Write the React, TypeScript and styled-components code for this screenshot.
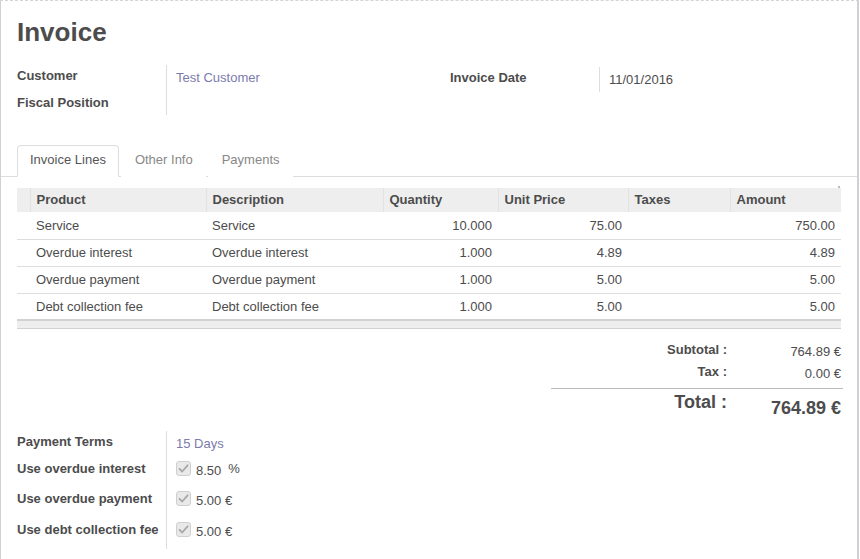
import React from "react";
import styled, { createGlobalStyle } from "styled-components";

const Global = createGlobalStyle`
  html, body { margin: 0; padding: 0; background: #fff; }
  body { font-family: "Liberation Sans", Arial, Helvetica, sans-serif; font-size: 13px; color: #4c4c4c; }
  * { box-sizing: border-box; }
`;

const Sheet = styled.div`
  width: 859px;
  height: 559px;
  border-top: 1px dashed #d4d4d4;
  border-left: 1px solid #cfcfd6;
  border-right: 2px solid #cfcfd6;
  background: #fff;
  padding-top: 16px;
  overflow: hidden;
`;

const Title = styled.h1`
  margin: 0 0 0 16px;
  font-size: 26px;
  line-height: 30px;
  font-weight: bold;
  color: #4c4c4c;
`;

const HeaderGrid = styled.div`
  display: grid;
  grid-template-columns: 433px 391px;
  margin: 18px 0 0 16px;
`;

const Group = styled.div<{ $top?: number }>`
  display: grid;
  grid-template-columns: 150px 1fr;
  align-content: start;
  padding-top: ${(p) => p.$top ?? 0}px;
`;

const Label = styled.div<{ $h?: number }>`
  font-weight: bold;
  color: #4c4c4c;
  height: ${(p) => p.$h ?? 27}px;
  padding-top: 3px;
  border-right: 1px solid #ddd;
  line-height: 15px;
`;

const Value = styled.div<{ $h?: number; $link?: boolean }>`
  height: ${(p) => p.$h ?? 27}px;
  padding: 5px 0 0 9px;
  line-height: 15px;
  color: ${(p) => (p.$link ? "#7c7bad" : "#4c4c4c")};
  display: flex;
  align-items: flex-start;
`;

const TabBar = styled.div`
  display: flex;
  margin-top: 30px;
  padding-left: 16px;
  border-bottom: 1px solid #ddd;
  height: 32px;
`;

const Tab = styled.div<{ $active?: boolean }>`
  height: 32px;
  padding: 0 ${(p) => (p.$active ? "12px 0 12px" : "12px 0 13px")};
  line-height: 28px;
  font-size: 13px;
  color: ${(p) => (p.$active ? "#555" : "#888")};
  border: 1px solid ${(p) => (p.$active ? "#ddd" : "transparent")};
  border-bottom-color: ${(p) => (p.$active ? "#fff" : "transparent")};
  border-radius: 4px 4px 0 0;
  background: #fff;
  margin-right: 2px;
  margin-bottom: -1px;
`;

const TableWrap = styled.div`
  position: relative;
  margin: 11px 16px 0 16px;
`;

const ScrollDot = styled.span`
  position: absolute;
  right: 1px;
  top: -2px;
  width: 2px;
  height: 2px;
  background: #bbb;
`;

const Table = styled.table`
  width: 100%;
  border-collapse: collapse;
  table-layout: fixed;
  font-size: 13px;
`;

const Th = styled.th<{ $w?: number }>`
  width: ${(p) => (p.$w ? `${p.$w}px` : "auto")};
  background: #eee;
  height: 24px;
  padding: 0 6px 1px;
  text-align: left;
  font-weight: bold;
  color: #4c4c4c;
  border-left: 1px solid #e2e2e2;
  &:first-child { border-left: none; }
`;

const Td = styled.td<{ $num?: boolean }>`
  height: 27px;
  padding: 0 6px;
  text-align: ${(p) => (p.$num ? "right" : "left")};
  border-bottom: 1px solid #ddd;
  color: #4c4c4c;
  white-space: nowrap;
`;

const FootCell = styled.td`
  height: 8px;
  padding: 0;
  background: #eee;
  border-top: 2px solid #d2d2d2;
  border-bottom: 1px solid #d2d2d2;
`;

const Totals = styled.div`
  display: grid;
  grid-template-columns: 182px 110px;
  width: 292px;
  margin: 13px 14px 0 auto;
`;

const TotLabel = styled.div<{ $big?: boolean }>`
  text-align: right;
  font-weight: bold;
  padding-right: 6px;
  font-size: ${(p) => (p.$big ? 18 : 13)}px;
  line-height: ${(p) => (p.$big ? 22 : 15)}px;
  height: ${(p) => (p.$big ? 30 : 22)}px;
  padding-top: 0;
`;

const TotValue = styled.div<{ $big?: boolean }>`
  text-align: right;
  padding-right: 2px;
  font-weight: ${(p) => (p.$big ? "bold" : "normal")};
  font-size: ${(p) => (p.$big ? 18 : 13)}px;
  line-height: ${(p) => (p.$big ? 22 : 15)}px;
  height: ${(p) => (p.$big ? 30 : 22)}px;
  padding-top: ${(p) => (p.$big ? 6 : 2)}px;
`;

const TotRule = styled.div`
  grid-column: 1 / 3;
  border-top: 1px solid #bbb;
  height: 0;
  margin: 2px 0 2px;
`;

const Bottom = styled.div`
  margin: 10px 0 0 16px;
  width: 433px;
`;

const CheckBox = styled.span`
  display: inline-flex;
  width: 15px;
  height: 15px;
  border: 1px solid #cfcfcf;
  border-radius: 3px;
  background: #e9e9e9;
  align-items: center;
  justify-content: center;
  margin: -2px 5px 0 0;
`;

const Pct = styled.span`
  margin-left: 7px;
  position: relative;
  top: -2px;
`;

const Check = () => (
  <CheckBox>
    <svg width="11" height="11" viewBox="0 0 11 11">
      <path d="M1.5 5.8 L4.2 8.5 L9.6 2.3" fill="none" stroke="#a8a8a8" strokeWidth="1.8" strokeLinecap="round" strokeLinejoin="round" />
    </svg>
  </CheckBox>
);

const rows = [
  ["Service", "Service", "10.000", "75.00", "", "750.00"],
  ["Overdue interest", "Overdue interest", "1.000", "4.89", "", "4.89"],
  ["Overdue payment", "Overdue payment", "1.000", "5.00", "", "5.00"],
  ["Debt collection fee", "Debt collection fee", "1.000", "5.00", "", "5.00"],
];

export default function App() {
  return (
    <>
      <Global />
      <Sheet>
        <Title>Invoice</Title>
        <HeaderGrid>
          <Group>
            <Label>Customer</Label>
            <Value $link>Test Customer</Value>
            <Label $h={23}>Fiscal Position</Label>
            <Value $h={23}></Value>
          </Group>
          <Group $top={2}>
            <Label $h={25}>Invoice Date</Label>
            <Value $h={25}>11/01/2016</Value>
          </Group>
        </HeaderGrid>

        <TabBar>
          <Tab $active>Invoice Lines</Tab>
          <Tab>Other Info</Tab>
          <Tab>Payments</Tab>
        </TabBar>

        <TableWrap>
          <ScrollDot />
          <Table>
            <thead>
              <tr>
                <Th $w={13}></Th>
                <Th $w={176}>Product</Th>
                <Th $w={177}>Description</Th>
                <Th $w={115}>Quantity</Th>
                <Th $w={130}>Unit Price</Th>
                <Th $w={102}>Taxes</Th>
                <Th>Amount</Th>
              </tr>
            </thead>
            <tbody>
              {rows.map((r, i) => (
                <tr key={i}>
                  <Td></Td>
                  <Td>{r[0]}</Td>
                  <Td>{r[1]}</Td>
                  <Td $num>{r[2]}</Td>
                  <Td $num>{r[3]}</Td>
                  <Td>{r[4]}</Td>
                  <Td $num>{r[5]}</Td>
                </tr>
              ))}
              <tr>
                <FootCell colSpan={7} />
              </tr>
            </tbody>
          </Table>
        </TableWrap>

        <Totals>
          <TotLabel>Subtotal :</TotLabel>
          <TotValue>764.89 €</TotValue>
          <TotLabel>Tax :</TotLabel>
          <TotValue>0.00 €</TotValue>
          <TotRule />
          <TotLabel $big>Total :</TotLabel>
          <TotValue $big>764.89 €</TotValue>
        </Totals>

        <Bottom>
          <Group>
            <Label $h={27}>Payment Terms</Label>
            <Value $h={27} $link>15 Days</Value>
            <Label $h={30}>Use overdue interest</Label>
            <Value $h={30}><Check />8.50<Pct>%</Pct></Value>
            <Label $h={31}>Use overdue payment</Label>
            <Value $h={31}><Check />5.00 €</Value>
            <Label $h={30}>Use debt collection fee</Label>
            <Value $h={30}><Check />5.00 €</Value>
          </Group>
        </Bottom>
      </Sheet>
    </>
  );
}
